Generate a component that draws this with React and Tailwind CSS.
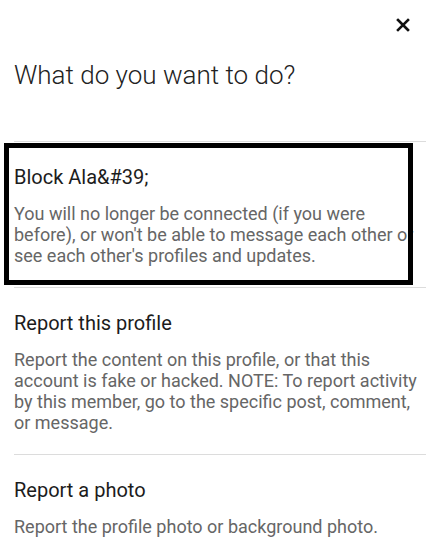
import React from "react";

const items = [
  {
    title: "Block Ala&#39;",
    desc: "You will no longer be connected (if you were before), or won't be able to message each other or see each other's profiles and updates.",
    boxed: true,
  },
  {
    title: "Report this profile",
    desc: "Report the content on this profile, or that this account is fake or hacked. NOTE: To report activity by this member, go to the specific post, comment, or message.",
  },
  {
    title: "Report a photo",
    desc: "Report the profile photo or background photo.",
  },
];

export default function App() {
  return (
    <div
      className="w-[426px] h-[557px] overflow-hidden bg-white"
      style={{ fontFamily: "Roboto, 'Liberation Sans', sans-serif" }}
    >
      <div className="flex justify-end pt-[18px] pr-[16px]">
        <svg width="14" height="14" viewBox="0 0 14 14" className="block">
          <path d="M2 2 L12 12 M12 2 L2 12" stroke="#111" strokeWidth="2.6" strokeLinecap="square" />
        </svg>
      </div>
      <h1 className="ml-[14px] mt-[27px] text-[26px] leading-[32px] font-light text-[#222]">
        What do you want to do?
      </h1>
      <div className="ml-[14px] mt-[50px]">
        {items.map((it, i) => (
          <div key={i} className="relative border-t border-[#dcdcdc] pt-[23px] pb-[21px]">
            <div className="text-[20px] leading-[24px] text-[#1c1c1c]">{it.title}</div>
            <p className="mt-[14px] text-[18px] leading-[21px] text-[#666] pr-[2px]">{it.desc}</p>
            {it.boxed && (
              <div className="absolute left-[-10px] top-[1px] right-[13px] bottom-[2px] border-[5px] border-black pointer-events-none" />
            )}
          </div>
        ))}
      </div>
    </div>
  );
}
